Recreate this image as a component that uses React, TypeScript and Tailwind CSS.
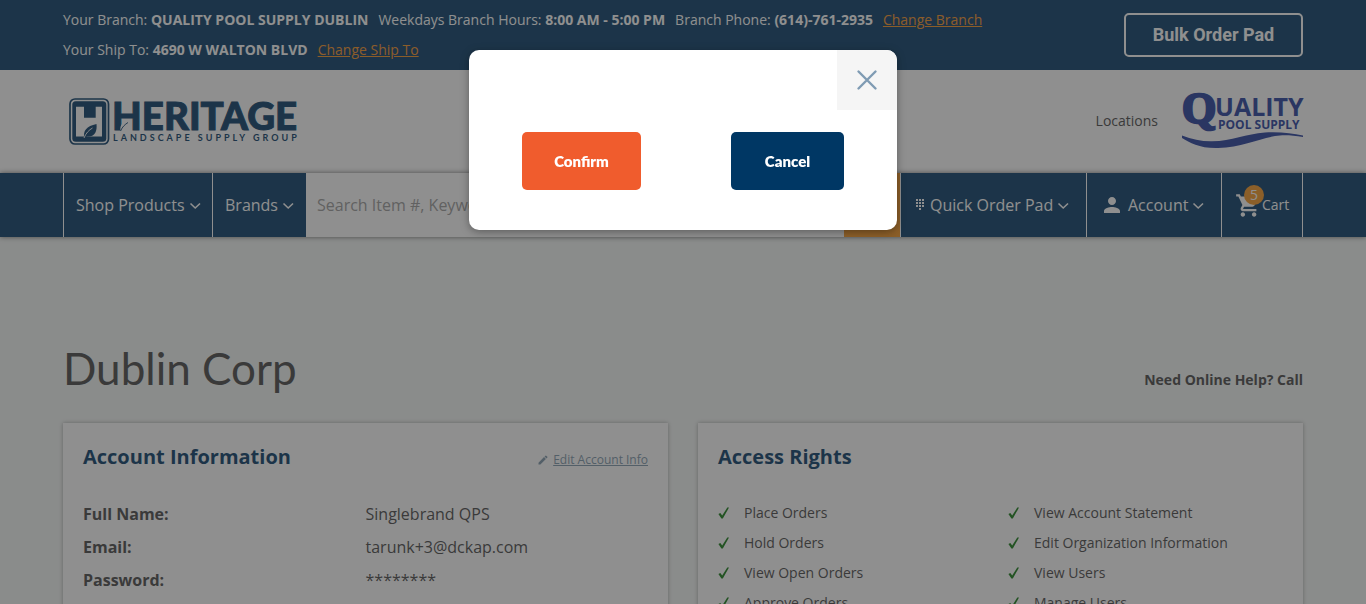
import React from "react";
import { MdPerson, MdShoppingCart, MdEdit } from "react-icons/md";

const rights: [string, string][] = [
  ["Place Orders", "View Account Statement"],
  ["Hold Orders", "Edit Organization Information"],
  ["View Open Orders", "View Users"],
  ["Approve Orders", "Manage Users"],
];

const account: [string, string][] = [
  ["Full Name:", "Singlebrand QPS"],
  ["Email:", "tarunk+3@dckap.com"],
  ["Password:", "********"],
];

function Chevron() {
  return (
    <svg width="12" height="8" viewBox="0 0 12 8" fill="none" stroke="currentColor" strokeWidth="1.6" className="mt-0.5" aria-hidden="true">
      <path d="M1.500 1.500 6.200 6 11 1.500" />
    </svg>
  );
}

function Tick() {
  return (
    <svg width="12" height="12" viewBox="0 0 12 12" className="shrink-0 text-[#107a10]" aria-hidden="true">
      <path d="M.4 6.900 2.300 6 4.200 8.600 9.300.6 11 .6 4.800 11.600 3.400 11.600Z" fill="currentColor" />
    </svg>
  );
}

function Keypad() {
  return (
    <svg width="8" height="12" viewBox="0 0 8 12" fill="currentColor" aria-hidden="true">
      {[0, 3, 6].map((y) => [0, 3, 6].map((x) => <rect key={`${x}-${y}`} x={x} y={y} width="2" height="2" />))}
      <rect x="3" y="9" width="2" height="2" />
    </svg>
  );
}

function HeritageLogo() {
  return (
    <svg width="230" height="49" viewBox="0 0 230 49" fill="#003764" className="overflow-visible" role="img" aria-label="Heritage Landscape Supply Group">
      <rect x="1" y="2" width="38.500" height="45" rx="5" fill="none" stroke="#003764" strokeWidth="1.700" />
      <rect x="3.300" y="4.300" width="34" height="40.500" rx="3.500" />
      <path d="M7 9.700h8v11h11.700v-11H33V39.500H7Z" fill="#fff" />
      <path d="M15.500 41c-2-7 2-12 12-14 .8 7-1.500 13.500-9.500 12.500Z" />
      <path d="M15 41c2-5 5-8 8.500-10" fill="none" stroke="#fff" strokeWidth=".9" />
      <text x="43" y="33" fontFamily="Lato, sans-serif" fontWeight="900" fontSize="38.500" stroke="#003764" strokeWidth="1">HERITAGE</text>
      <path d="M51.500 34c-1-6.500 2.500-10 11-11.500 .5 6-2 11-8 10.500Z" fill="#fff" />
      <path d="M51.500 34c2-4.500 4.500-6.500 7.500-8.500" fill="none" stroke="#003764" strokeWidth=".9" />
      <text x="44" y="44" fontFamily="Lato, sans-serif" fontWeight="700" fontSize="9" letterSpacing="3">LANDSCAPE SUPPLY GROUP</text>
    </svg>
  );
}

function QualityLogo() {
  return (
    <svg width="121" height="56" viewBox="0 0 121 56" fill="#213a9c" className="overflow-visible" role="img" aria-label="Quality Pool Supply">
      <text x="0" y="30" fontFamily="'Liberation Serif', serif" fontWeight="700" fontSize="44" stroke="#213a9c" strokeWidth="2.500">Q</text>
      <text x="33" y="23" fontFamily="'Open Sans', sans-serif" fontWeight="700" fontSize="25">UALITY</text>
      <text x="36" y="36" fontFamily="'Open Sans', sans-serif" fontWeight="700" fontSize="12">POOL SUPPLY</text>
      <path d="M0 42.500C10 46.500 20 48.500 30 48.300 50 48 64 41 83 39.500 98 38.500 110 40.500 121 42.500v1.500C112 42.500 104 42 98 42.500 80 44 62 54 36 55 18 55.500 8 50 0 45Z" />
    </svg>
  );
}

export default function App() {
  return (
    <div className="h-screen overflow-hidden bg-[#f4f8f6] font-['Open_Sans',sans-serif] text-[#444]">
      <div className="bg-[#003764] text-sm leading-[30px] text-white">
        <div className="mx-auto flex max-w-[1240px] items-start justify-between">
          <div className="py-[5px]">
            <p className="flex gap-2.5">
              <span>Your Branch: <b>QUALITY POOL SUPPLY DUBLIN</b></span>
              <span>Weekdays Branch Hours: <b>8:00 AM - 5:00 PM</b></span>
              <span>Branch Phone: <b>(614)-761-2935</b></span>
              <a href="#branch" className="text-[#f7901e] underline">Change Branch</a>
            </p>
            <p className="flex gap-2.5">
              <span>Your Ship To: <b>4690 W WALTON BLVD</b></span>
              <a href="#ship" className="text-[#f7901e] underline">Change Ship To</a>
            </p>
          </div>
          <button type="button" className="mt-[13px] h-11 w-[179px] rounded-[5px] border-2 border-white font-['Roboto',sans-serif] text-lg font-bold">
            Bulk Order Pad
          </button>
        </div>
      </div>

      <header className="bg-white">
        <div className="mx-auto flex h-[103px] max-w-[1240px] items-center justify-between pl-1.5">
          <a href="#home"><HeritageLogo /></a>
          <div className="flex items-center gap-6 pb-0.5">
            <a href="#locations" className="text-sm">Locations</a>
            <a href="#quality"><QualityLogo /></a>
          </div>
        </div>
      </header>

      <nav className="relative bg-[#003764] text-white shadow-[0_0_5px_rgba(0,0,0,0.6)]">
        <div className="mx-auto flex h-16 max-w-[1240px]">
          <button type="button" className="flex w-[150px] items-center gap-1 border-x border-white pl-3">
            Shop Products <Chevron />
          </button>
          <button type="button" className="flex w-[93px] items-center gap-1 pl-3">
            Brands <Chevron />
          </button>
          <input
            type="search"
            aria-label="Search"
            placeholder="Search Item #, Keyword"
            className="min-w-0 flex-1 bg-white px-[11px] placeholder:text-[#999]"
          />
          <button type="button" aria-label="Search" className="w-14 bg-[#f7941d]" />
          <button type="button" className="flex w-[187px] items-center border-x border-white pl-[15px]">
            <Keypad />
            <span className="mr-1 ml-1.5">Quick Order Pad</span>
            <Chevron />
          </button>
          <button type="button" className="flex w-[134px] items-center pl-[13px]">
            <MdPerson className="size-6" />
            <span className="mr-1 ml-1">Account</span>
            <Chevron />
          </button>
          <a href="#cart" className="relative flex w-[82px] items-center border-x border-white pl-[13px] text-sm">
            <MdShoppingCart className="size-[27px]" />
            Cart
            <span className="absolute top-3 left-[22px] flex size-5 items-center justify-center rounded-full bg-[#f7941d] text-sm">5</span>
          </a>
        </div>
      </nav>

      <main className="mx-auto max-w-[1240px] pt-[98px]">
        <div className="flex items-baseline justify-between">
          <h1 className="font-['Lato',sans-serif] text-[44px] leading-[66px]">Dublin Corp</h1>
          <p className="text-sm font-bold">Need Online Help? Call</p>
        </div>
        <div className="mt-[22px] grid grid-cols-2 gap-[30px]">
          <section className="bg-white px-5 pt-[19px] pb-12 shadow-[0_0_4px_rgba(0,0,0,0.35)]">
            <div className="flex items-center justify-between">
              <h2 className="text-xl leading-[30px] font-bold text-[#003764]">Account Information</h2>
              <a href="#edit" className="mt-1.5 flex items-center gap-1 text-xs text-[#7b95a8]">
                <MdEdit className="size-3" />
                <span className="underline">Edit Account Info</span>
              </a>
            </div>
            <dl className="mt-[26px]">
              {account.map(([k, v]) => (
                <div key={k} className="flex leading-[33px]">
                  <dt className="w-1/2 font-bold">{k}</dt>
                  <dd>{v}</dd>
                </div>
              ))}
            </dl>
          </section>
          <section className="bg-white px-5 pt-[19px] pb-12 shadow-[0_0_4px_rgba(0,0,0,0.35)]">
            <h2 className="text-xl leading-[30px] font-bold text-[#003764]">Access Rights</h2>
            <ul className="mt-[26px] text-sm leading-[30px]">
              {rights.map(([a, b]) => (
                <li key={a} className="flex">
                  <span className="flex w-[290px] items-center gap-3.5"><Tick />{a}</span>
                  <span className="flex items-center gap-3.5"><Tick />{b}</span>
                </li>
              ))}
            </ul>
          </section>
        </div>
      </main>

      <div className="fixed inset-0 flex items-start justify-center bg-[#333]/55 pt-[50px]">
        <div role="dialog" aria-modal="true" aria-label="Confirm action" className="w-[428px] overflow-hidden rounded-[10px] bg-white pb-10 shadow-[0_2px_8px_rgba(0,0,0,0.35)]">
          <div className="flex justify-end">
            <button type="button" aria-label="Close" className="flex size-[60px] items-center justify-center bg-[#f5f5f5]">
              <svg width="22" height="22" viewBox="0 0 22 22" stroke="#7f9bb3" strokeWidth="2.400" strokeLinecap="round" aria-hidden="true">
                <path d="M2.500 2.500l17 17M19.500 2.500l-17 17" />
              </svg>
            </button>
          </div>
          <div className="mt-[22px] flex justify-between px-[53px] font-['Lato',sans-serif] text-[15px] font-extrabold text-white">
            <button type="button" className="h-[58px] w-[119px] rounded-[5px] bg-[#f05c2d]">Confirm</button>
            <button type="button" className="h-[58px] w-[113px] rounded-[5px] bg-[#003764]">Cancel</button>
          </div>
        </div>
      </div>
    </div>
  );
}
